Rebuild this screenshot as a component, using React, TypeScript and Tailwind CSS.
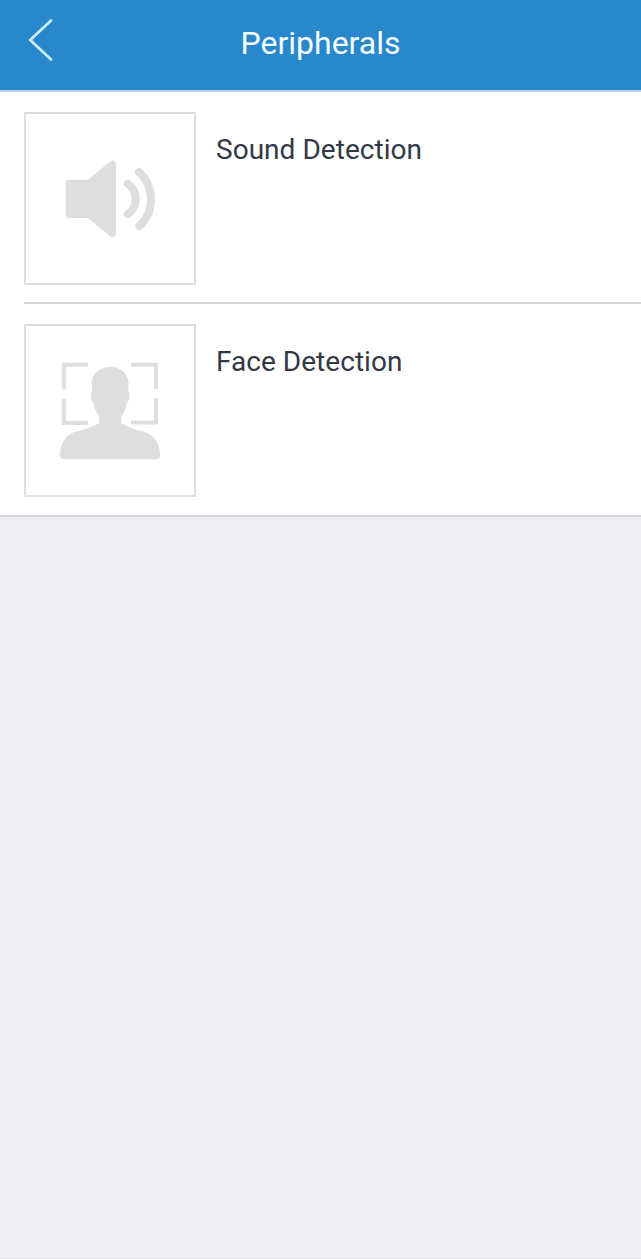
import type { ReactNode } from "react";
import { clsx } from "clsx";

function BackIcon() {
  return (
    <svg
      className="h-[46px] w-[30px]"
      viewBox="0 0 30 46"
      fill="none"
      stroke="#cdeafc"
      strokeWidth="2.8"
      strokeLinecap="round"
      strokeLinejoin="round"
    >
      <path d="M25 3.4 4.2 23 25 42.6" />
    </svg>
  );
}

function SoundIcon() {
  return (
    <svg className="size-full" viewBox="0 0 172 173" fill="none">
      <path
        fill="#dedede"
        d="M45.2 67.7H64L86.4 49.4C88.8 47.4 92 48.8 92 52V121.8C92 125 88.8 126.4 86.4 124.5L64 106H45.2C43 106 41.7 104.7 41.7 102.5V71.2C41.7 69 43 67.7 45.2 67.7Z"
      />
      <g stroke="#dedede" strokeWidth="8" strokeLinecap="round">
        <path d="M103.7 71.7A18.6 18.6 0 0 1 103.7 102.3" />
        <path d="M114.9 60A36.5 36.5 0 0 1 115.3 114" />
      </g>
    </svg>
  );
}

function FaceIcon() {
  return (
    <svg className="size-full" viewBox="0 0 172 173" fill="none">
      <path
        stroke="#dedede"
        strokeWidth="4"
        d="M64 40.7H39.8V64.7M107 40.7H132V64.7M39.8 74.7V99H64M132 74.3V98.4H107"
      />
      <path
        fill="#dedede"
        d="M86.2 42.7C96.5 42.7 104.5 50 104.5 59L104.3 67.2C105.4 68 105.6 70.5 105.2 73.5C104.8 76.5 104.2 78.4 102.9 78.9C102 84.5 100 89 97.3 92V99.3C103.5 102.8 110.5 105.6 119 107.6C130 110.3 136 119.5 136 131.5C136 134 134.6 135.2 132.2 135.2H39.8C37.4 135.2 36 134 36 131.5C36 119.5 42 110.3 52 107.6C60.5 105.6 68.8 102.8 75.2 99.3V92C72.4 89 70.4 84.5 69.5 78.9C68.2 78.4 67.4 76.5 67 73.5C66.6 70.5 66.8 68 67.9 67.2L67.7 59C67.7 50 76 42.7 86.2 42.7Z"
      />
    </svg>
  );
}

interface PeripheralRowProps {
  title: string;
  icon: ReactNode;
  divided?: boolean;
}

function PeripheralRow({ title, icon, divided }: PeripheralRowProps) {
  return (
    <li
      className={clsx(
        "ml-6 flex gap-5 pt-5",
        divided ? "h-[212px] border-b-2 border-[#d6d6db]" : "h-[211px]"
      )}
    >
      <div className="relative h-[173px] w-[172px] shrink-0 border-2 border-[#dddee0]">
        <div className="absolute -inset-0.5">{icon}</div>
      </div>
      <h2 className="pt-[18px] text-[28px] leading-10 tracking-[0.03px] text-[#333846]">
        {title}
      </h2>
    </li>
  );
}

export default function App() {
  return (
    <div className="flex min-h-screen flex-col bg-[#eeeef3] font-['Roboto',sans-serif]">
      <header className="grid h-[92px] grid-cols-[1fr_auto_1fr] items-start border-b-2 border-[#bccfe2] bg-[#2988cc]">
        <button className="ml-[26px] mt-[17px] w-fit" aria-label="Back">
          <BackIcon />
        </button>
        <h1 className="pt-[23px] text-[32px] leading-10 text-[#f4fcff]">
          Peripherals
        </h1>
      </header>
      <ul className="border-b-2 border-[#d6d6db] bg-white">
        <PeripheralRow title="Sound Detection" icon={<SoundIcon />} divided />
        <PeripheralRow title="Face Detection" icon={<FaceIcon />} />
      </ul>
      <div className="mt-auto h-px bg-[#e7e7eb]" />
    </div>
  );
}
